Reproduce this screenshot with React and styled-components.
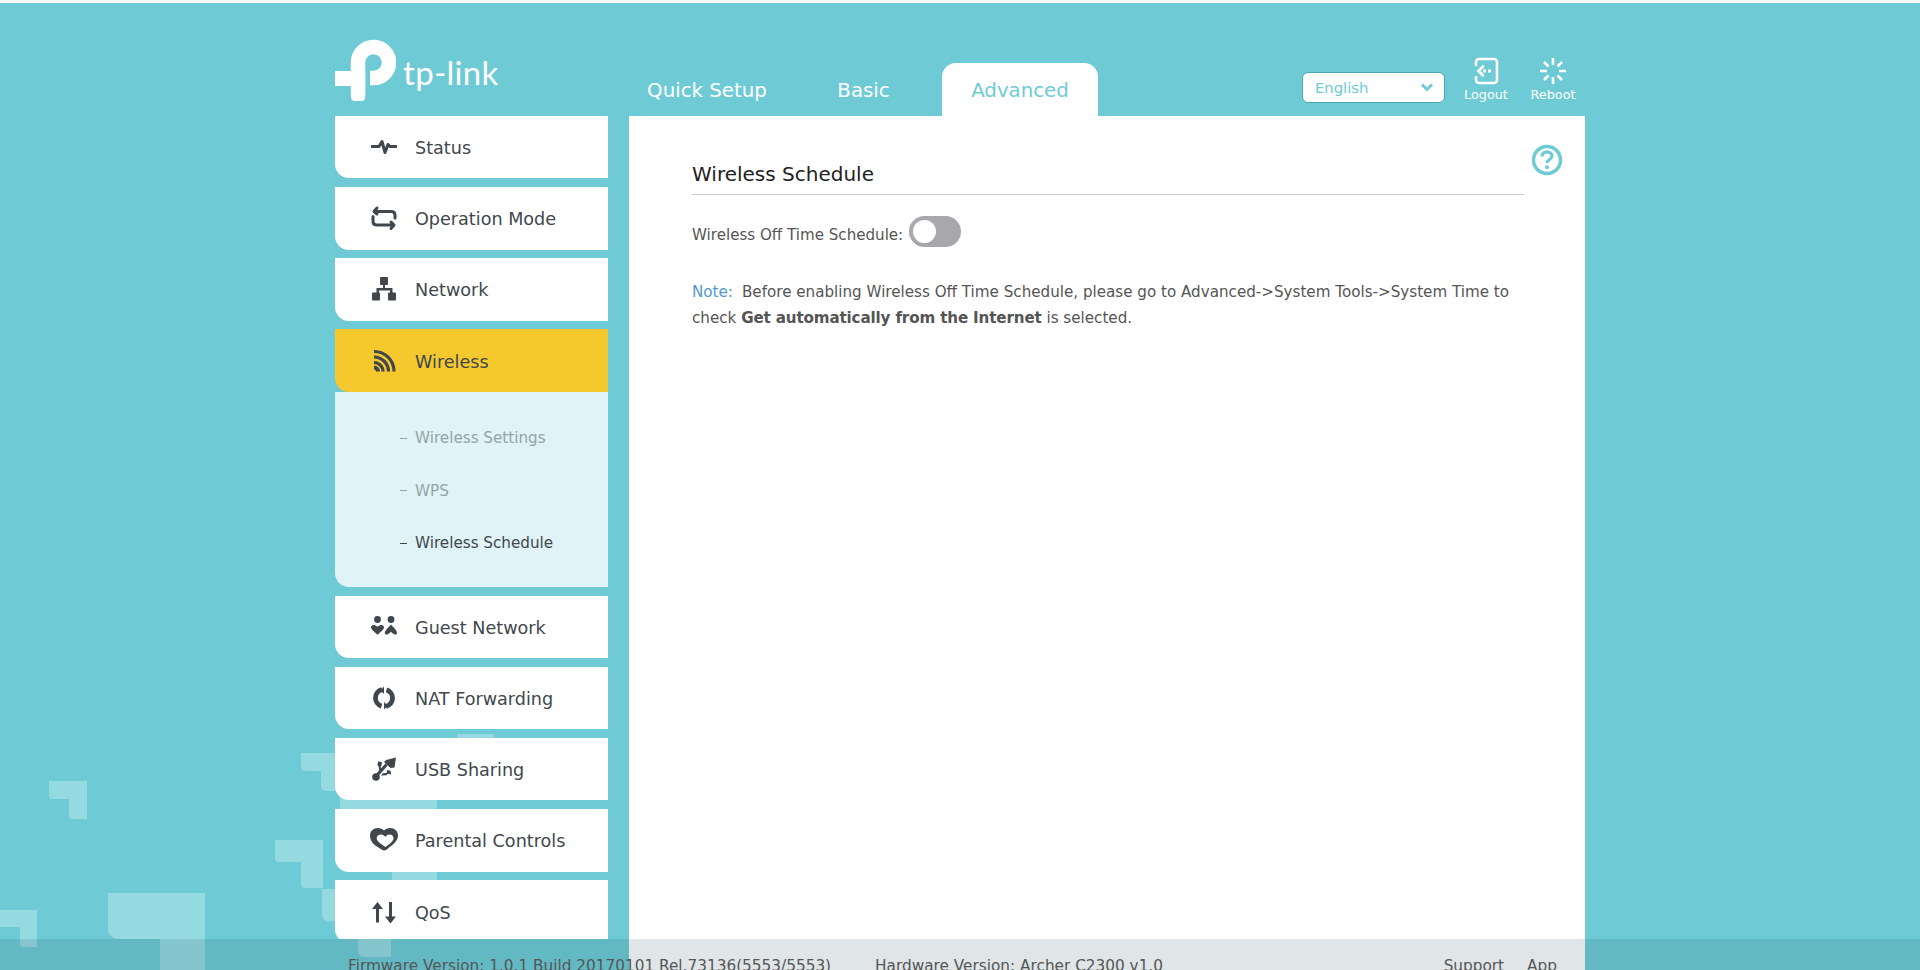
import React from "react";
import styled, { createGlobalStyle } from "styled-components";

const teal = "#6ecbd6";
const ink = "#3f474d";
const FONT = `"DejaVu Sans", Verdana, sans-serif`;

const Global = createGlobalStyle`
  html, body { margin: 0; padding: 0; height: 100%; overflow: hidden; background: ${teal}; }
  #root { height: 100%; }
  * { box-sizing: border-box; }
`;

const Page = styled.div`
  position: relative;
  width: 100%;
  height: 970px;
  overflow: hidden;
  background: ${teal};
  border-top: 3px solid #fff;
  font-family: ${FONT};
  color: ${ink};
`;
const Backdrop = styled.svg`
  position: absolute;
  left: 0;
  top: -3px;
  width: 1920px;
  height: 970px;
`;
const Shell = styled.div`
  position: relative;
  width: 1250px;
  height: 967px;
  margin: 0 auto;
  display: flex;
  flex-direction: column;
`;
const Header = styled.header`
  height: 113px;
  display: flex;
  align-items: flex-end;
`;
const LogoBox = styled.div`
  width: 294px;
  height: 80px;
  display: flex;
  align-items: flex-start;
  gap: 7px;
  color: #fff;
`;
const Wordmark = styled.span`
  font-family: "Lato", sans-serif;
  font-weight: 400;
  font-size: 33px;
  line-height: 40px;
  margin-top: 16px;
  letter-spacing: 0.3px;
  color: #fff;
`;
const Tabs = styled.nav`
  display: flex;
  align-items: flex-end;
  height: 53px;
`;
const Tab = styled.a`
  height: 53px;
  width: ${(p) => p.$w}px;
  display: flex;
  align-items: center;
  justify-content: center;
  padding-top: 1px;
  font-size: 19.8px;
  color: ${(p) => (p.$active ? teal : "#fff")};
  background: ${(p) => (p.$active ? "#fff" : "transparent")};
  border-radius: 14px 14px 0 0;
`;
const Tools = styled.div`
  margin-left: auto;
  display: flex;
  align-items: flex-start;
  height: 60px;
  padding: 1px 10px 0 0;
`;
const Select = styled.div`
  width: 143px;
  height: 31px;
  margin-top: 15px;
  margin-right: 19px;
  padding: 0 10px 0 12px;
  background: #fff;
  border: 1px solid #4aa8b3;
  border-radius: 6px;
  display: flex;
  align-items: center;
  justify-content: space-between;
  color: ${teal};
  font-size: 14.8px;
`;
const Tool = styled.a`
  width: ${(p) => p.$w}px;
  margin-right: ${(p) => p.$mr || 0}px;
  display: flex;
  flex-direction: column;
  align-items: center;
  color: #fff;
  font-size: 12.8px;
  line-height: 16px;
`;
const ToolIcon = styled.svg`
  width: 28px;
  height: 28px;
  margin-bottom: 2px;
  display: block;
`;
const Body = styled.div`
  display: flex;
  flex: 1;
  gap: 21px;
  min-height: 0;
`;
const Sidebar = styled.aside`
  width: 273px;
  height: 823px;
  overflow: hidden;
  flex: none;
`;
const Item = styled.a`
  height: 62.4px;
  margin-bottom: ${(p) => (p.$open ? 0 : "8.75px")};
  padding-left: 36px;
  display: flex;
  align-items: center;
  gap: 18px;
  background: ${(p) => (p.$open ? "#f5c92e" : "#fff")};
  border-bottom-left-radius: 14px;
  font-size: 17.6px;
  color: ${ink};
`;
const ItemLabel = styled.span`
  padding-top: 2px;
`;
const NavIcon = styled.svg`
  width: 26px;
  height: 26px;
  flex: none;
  display: block;
  color: ${ink};
`;
const SubMenu = styled.div`
  height: 195px;
  margin-bottom: 9px;
  padding-top: 20px;
  background: #e0f3f6;
  border-bottom-left-radius: 14px;
`;
const SubItem = styled.a`
  height: 52.6px;
  padding-left: 65px;
  display: flex;
  align-items: center;
  gap: 8px;
  font-size: 15.2px;
  color: ${(p) => (p.$active ? ink : "#93a4a8")};
`;
const Dash = styled.span`
  width: 7px;
  height: 1px;
  background: currentColor;
`;
const Content = styled.main`
  width: 956px;
  position: relative;
  background: #fff;
  padding: 44px 61px 0 63px;
`;
const Help = styled.svg`
  position: absolute;
  right: 22px;
  top: 28px;
  width: 32px;
  height: 32px;
`;
const Title = styled.h2`
  margin: 0;
  height: 35px;
  padding-top: 1px;
  font-weight: 400;
  font-size: 20px;
  line-height: 26px;
  color: #222;
  border-bottom: 1px solid #ccc;
`;
const Row = styled.div`
  display: flex;
  align-items: center;
  gap: 6px;
  margin-top: 21px;
  font-size: 15.1px;
  color: #555;
`;
const Label = styled.span`
  padding-top: 7px;
`;
const Toggle = styled.span`
  width: 52px;
  height: 31px;
  border-radius: 16px;
  background: #a8a8ac;
  padding: 4px 0 0 4px;
  display: block;
`;
const Knob = styled.span`
  width: 23px;
  height: 23px;
  border-radius: 50%;
  background: #fff;
  display: block;
`;
const Note = styled.p`
  margin: 33px 0 0;
  font-size: 15.15px;
  line-height: 25.5px;
  color: #555;
`;
const NoteTag = styled.span`
  color: #4f9ac9;
  margin-right: 9px;
`;
const Strong = styled.b`
  letter-spacing: -0.15px;
`;
const Footer = styled.footer`
  position: absolute;
  left: 0;
  right: 0;
  bottom: 0;
  height: 31px;
  background: rgba(20, 70, 85, 0.135);
  overflow: hidden;
`;
const FooterInner = styled.div`
  width: 1250px;
  margin: 0 auto;
  padding: 17px 28px 0 13px;
  display: flex;
  font-size: 15.3px;
  line-height: 20px;
  color: #555;
  white-space: nowrap;
`;
const FooterText = styled.span`
  margin-right: ${(p) => p.$mr || 0}px;
  margin-left: ${(p) => (p.$push ? "auto" : 0)};
`;

const Solid = (p) => <NavIcon viewBox="0 0 26 26" fill="currentColor" {...p} />;
const Line = (p) => (
  <NavIcon viewBox="0 0 26 26" fill="none" stroke="currentColor" strokeWidth="2.6" strokeLinecap="round" strokeLinejoin="round" {...p} />
);

const icons = {
  status: (
    <Line strokeWidth="3">
      <path d="M1 12.500h7l3-5 3 11 3-8 2 2h6" />
    </Line>
  ),
  mode: (
    <Line strokeWidth="3">
      <path d="M6 3 3 6.500 6 9" />
      <path d="M4 6.500h16c2.500 0 4 1.500 4 3.500v3" />
      <path d="M20 17l3 3-3 3.500" />
      <path d="M22 20H6c-2.500 0-4-1.500-4-3.500v-5" />
    </Line>
  ),
  network: (
    <Solid>
      <rect x="9" y="1" width="8" height="8" rx="1" />
      <rect x="1" y="16.500" width="8" height="8" rx="1" />
      <rect x="17" y="16.500" width="8" height="8" rx="1" />
      <path d="M12 8h2v4h7.500v5h-2.500v-2.500H8V17H5.500v-5H12z" />
    </Solid>
  ),
  wireless: (
    <Line strokeLinecap="butt" strokeWidth="3.200">
      <path d="M3 3.500c11 0 20 8.500 20 20" />
      <path d="M3 9c8 0 14.500 6.500 14.500 14.500" />
      <path d="M3 14.500c5 0 9 4 9 9" />
      <path d="M3 19.500c2.200 0 4 1.800 4 4" strokeWidth="4" />
    </Line>
  ),
  guest: (
    <Solid>
      <circle cx="6.500" cy="5.500" r="3.400" />
      <circle cx="20" cy="5.500" r="3.400" />
      <path d="M0 13.500c0-2.500 3-3.500 6.500-.8 3.500-2.700 6.500-1.700 6.500.8 0 2-3.500 4.500-6.500 7.300C3.500 18 0 15.500 0 13.500z" />
      <path d="M20 10.500c2 2.500 6 5.500 6 8.500 0 1.600-2 1.800-3 1.200-1.200-.8-2.300-1.700-3-2.400-.8.700-1.800 1.600-3 2.400-1 .6-3.200.4-3.200-1.200 0-3 4.200-6 6.200-8.500z" />
    </Solid>
  ),
  nat: (
    <NavIcon viewBox="0 0 26 26">
      <g fill="none" stroke="currentColor" strokeWidth="4.800">
        <path d="M15.500 4.900A8.500 8.500 0 0 1 15 21.300" />
        <path d="M10.500 21.100A8.500 8.500 0 0 1 11 4.700" />
      </g>
      <path fill="currentColor" d="M13 1.500v7.500l-3.500-3.700zM13 24.500V17l3.500 3.700z" />
    </NavIcon>
  ),
  usb: (
    <Solid>
      <circle cx="5" cy="21" r="3.800" />
      <path d="M3.500 19.500 14.500 7.500l2.200 2L5.700 22z" />
      <path d="M8.500 16 7.700 10.500 6.500 9.500l.5-4 4 .6-.5 3.400-.8.800.7 4.500z" />
      <path d="M10 19.500 15.500 19.300l1.300-1.500 3.400.8-.7-3.800-3.500-.8-.3 3-4 .2z" />
      <path d="M15 4 25 1.500l-1.500 10-4 .5L13 6z" />
    </Solid>
  ),
  parental: (
    <Solid viewBox="0 0 28 24" style={{ width: 28, marginLeft: -1, marginRight: -1 }}>
      <path fillRule="evenodd" d="M0 7.500C0 3 3.500 0 8 0c2.500 0 4.500 1 6 2.500C15.500 1 17.500 0 20 0c4.500 0 8 3 8 7.500 0 3-1.500 5.500-4 8-2 2-4.500 3.500-6.500 5.500-1.500 1.500-4 2-6 .5C9 19.500 4.500 18 2 14 .7 12 0 9.500 0 7.500zM11 6.500c-2.500 0-4.300 1.600-4.300 3.800 0 3 4.500 6 8.800 8.700 3.500-2.500 8-5.500 8-8.700 0-2.200-1.800-3.800-4-3.800-1.900 0-3.300 1.200-4.300 2.500-1-1.300-2.300-2.500-4.200-2.500z" />
    </Solid>
  ),
  qos: (
    <Solid>
      <path d="M6.500 3 12 10H8v13.500H5V10H1z" />
      <path d="M19.500 24.500 14 17.500h4V3h3v14.500h4z" />
    </Solid>
  ),
};

const nav = [
  ["status", "Status"],
  ["mode", "Operation Mode"],
  ["network", "Network"],
  ["wireless", "Wireless", true],
  ["guest", "Guest Network"],
  ["nat", "NAT Forwarding"],
  ["usb", "USB Sharing"],
  ["parental", "Parental Controls"],
  ["qos", "QoS"],
];

const subs = [
  ["Wireless Settings", false],
  ["WPS", false],
  ["Wireless Schedule", true],
];

export default function App() {
  return (
    <Page>
      <Global />
      <Backdrop viewBox="0 0 1920 970" fill="#fff" fillOpacity="0.27">
        <path d="M49 781h38v38H72a3 3 0 0 1-3-3v-17H52a3 3 0 0 1-3-3z" />
        <path d="M0 910h37v37H23a3 3 0 0 1-3-3v-17H0z" />
        <path d="M108 893h97v77h-45v-31h-42a10 10 0 0 1-10-10z" />
        <path d="M275 840h48v48h-18a4 4 0 0 1-4-4v-22h-22a4 4 0 0 1-4-4z" />
        <path d="M301 753h40v38h-16a4 4 0 0 1-4-4v-16h-16a4 4 0 0 1-4-4z" />
        <path d="M322 889h20v32h-14a6 6 0 0 1-6-6z" />
        <path d="M457 734h37v10h-37z" />
        <path d="M340 795h97v20h-97z" />
        <path d="M392 865h45v22h-45z" />
        <path d="M358 925h33v32h-27a6 6 0 0 1-6-6z" />
      </Backdrop>
      <Shell>
        <Header>
          <LogoBox>
            <svg width="61" height="62" viewBox="0 0 61 62" style={{ marginTop: 3 }}>
              <path d="M23 56V23a15.500 15.500 0 1 1 15.500 16H35" fill="none" stroke="#fff" strokeWidth="14.500" />
              <path d="M0 32h30.200v26a4 4 0 0 1-4 4H20a4 4 0 0 1-4-4V47H0z" fill="#fff" />
            </svg>
            <Wordmark>tp-link</Wordmark>
          </LogoBox>
          <Tabs>
            <Tab $w={156}>Quick Setup</Tab>
            <Tab $w={157}>Basic</Tab>
            <Tab $w={156} $active>Advanced</Tab>
          </Tabs>
          <Tools>
            <Select>
              English
              <svg width="14" height="9" viewBox="0 0 14 9">
                <path d="M2 1.500 7 6.500l5-5" fill="none" stroke={teal} strokeWidth="3" />
              </svg>
            </Select>
            <Tool $w={44} $mr={23}>
              <ToolIcon viewBox="0 0 28 28" fill="none" stroke="#fff" strokeWidth="2.600" strokeLinecap="round">
                <path d="M4 8V5a3 3 0 0 1 3-3h15a3 3 0 0 1 3 3v18a3 3 0 0 1-3 3H7a3 3 0 0 1-3-3v-3" />
                <path d="M11 9.500 6.500 14l4.500 4.500" strokeWidth="2.800" />
                <path d="M11 14h8" strokeWidth="2.800" strokeDasharray="3 2" strokeLinecap="butt" />
              </ToolIcon>
              Logout
            </Tool>
            <Tool $w={44}>
              <ToolIcon viewBox="0 0 28 28" fill="none" stroke="#fff" strokeWidth="2.600">
                <path d="M14 1v7M14 20v7M1 14h7M20 14h7M5 5l4.500 4.500M18.500 18.500 23 23M23 5l-4.500 4.500M9.500 18.500 5 23" />
              </ToolIcon>
              Reboot
            </Tool>
          </Tools>
        </Header>
        <Body>
          <Sidebar>
            {nav.map(([key, label, open]) => (
              <React.Fragment key={key}>
                <Item $open={open}>
                  {icons[key]}
                  <ItemLabel>{label}</ItemLabel>
                </Item>
                {open && (
                  <SubMenu>
                    {subs.map(([text, active]) => (
                      <SubItem key={text} $active={active}>
                        <Dash />
                        {text}
                      </SubItem>
                    ))}
                  </SubMenu>
                )}
              </React.Fragment>
            ))}
          </Sidebar>
          <Content>
            <Help viewBox="0 0 32 32" fill="none" stroke={teal}>
              <circle cx="16" cy="16" r="13.500" strokeWidth="3.500" />
              <path d="M11 12.500c0-3 2.300-4.700 5-4.700s5 1.700 5 4.300c0 3.400-5 3.400-5 7" strokeWidth="3.200" />
              <circle cx="16" cy="23.300" r="2" fill={teal} stroke="none" />
            </Help>
            <Title>Wireless Schedule</Title>
            <Row>
              <Label>Wireless Off Time Schedule:</Label>
              <Toggle>
                <Knob />
              </Toggle>
            </Row>
            <Note>
              <NoteTag>Note:</NoteTag>Before enabling Wireless Off Time Schedule, please go to Advanced-&gt;System Tools-&gt;System Time to
              <br />
              check <Strong>Get automatically from the Internet</Strong> is selected.
            </Note>
          </Content>
        </Body>
      </Shell>
      <Footer>
        <FooterInner>
          <FooterText $mr={44}>Firmware Version: 1.0.1 Build 20170101 Rel.73136(5553/5553)</FooterText>
          <FooterText>Hardware Version: Archer C2300 v1.0</FooterText>
          <FooterText $push $mr={23}>Support</FooterText>
          <FooterText>App</FooterText>
        </FooterInner>
      </Footer>
    </Page>
  );
}
